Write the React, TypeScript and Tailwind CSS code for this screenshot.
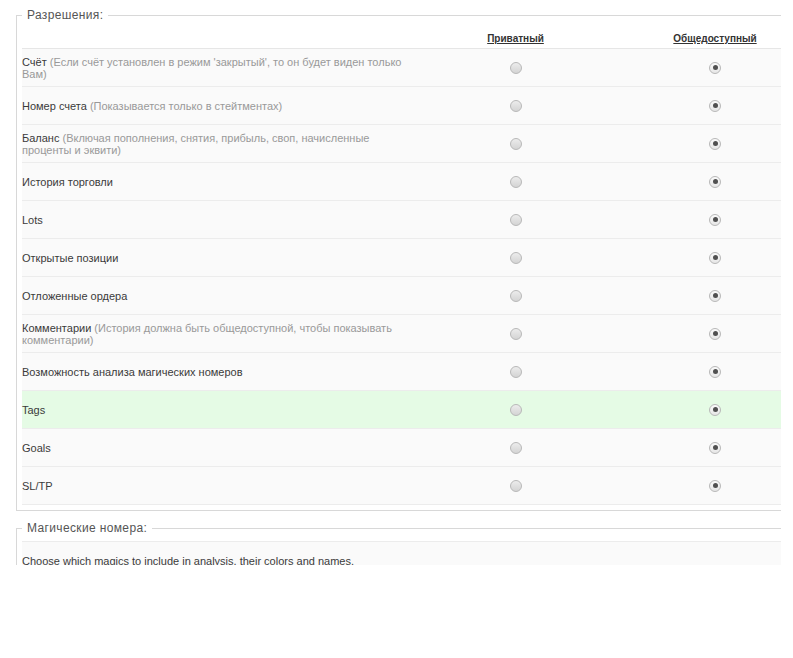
import React from 'react';

type Row = { label: string; note?: string; highlight?: boolean };

const rows: Row[] = [
  { label: 'Счёт', note: "(Если счёт установлен в режим 'закрытый', то он будет виден только Вам)" },
  { label: 'Номер счета', note: '(Показывается только в стейтментах)' },
  { label: 'Баланс', note: '(Включая пополнения, снятия, прибыль, своп, начисленные проценты и эквити)' },
  { label: 'История торговли' },
  { label: 'Lots' },
  { label: 'Открытые позиции' },
  { label: 'Отложенные ордера' },
  { label: 'Комментарии', note: '(История должна быть общедоступной, чтобы показывать комментарии)' },
  { label: 'Возможность анализа магических номеров' },
  { label: 'Tags', highlight: true },
  { label: 'Goals' },
  { label: 'SL/TP' },
];

function Radio({ checked }: { checked?: boolean }) {
  if (checked) {
    return (
      <span className="flex h-3 w-3 items-center justify-center rounded-full border border-[#b8b8b8] bg-gradient-to-b from-[#fbfbfb] to-[#e6e6e6]">
        <span className="h-[5px] w-[5px] rounded-full bg-[#505050]" />
      </span>
    );
  }
  return (
    <span className="block h-3 w-3 rounded-full border border-[#b8b8b8] bg-gradient-to-b from-[#ececec] to-[#d4d4d4]" />
  );
}

export default function App() {
  return (
    <div className="h-[565px] w-[781px] overflow-hidden bg-white font-['Liberation_Sans',Arial,sans-serif] text-[11px] text-[#3a3a3a]">
      <div className="w-[830px] pl-4 pt-[7px]">
        <fieldset className="border border-[#d8d8d8] px-[5px] pb-[5px]">
          <legend className="px-[5px] text-[12px] leading-4 tracking-[0.03em] text-[#555]">Разрешения:</legend>
          <div className="grid grid-cols-[396px_195px_204px] border-b border-[#e6e6e6] pt-[10px] pb-[3px] text-[10px] font-bold leading-3 text-[#333]">
            <span />
            <span className="text-center underline">Приватный</span>
            <span className="text-center underline">Общедоступный</span>
          </div>
          {rows.map((r) => (
            <div
              key={r.label}
              className={`grid h-[38px] grid-cols-[396px_195px_204px] items-center border-b border-[#ececec] ${r.highlight ? 'bg-[#e5fbe5]' : 'bg-[#fafafa]'}`}
            >
              <div className="pr-[8px] leading-[12px]">
                {r.label}
                {r.note && <span className="text-[#999]"> {r.note}</span>}
              </div>
              <div className="flex justify-center">
                <Radio />
              </div>
              <div className="flex justify-center">
                <Radio checked />
              </div>
            </div>
          ))}
        </fieldset>
        <fieldset className="mt-[9px] border border-[#d8d8d8] px-[5px] pb-2">
          <legend className="px-[5px] text-[12px] leading-4 tracking-[0.03em] text-[#555]">Магические номера:</legend>
          <div className="h-[6px] border-b border-[#ececec]" />
          <div className="bg-[#fafafa] pt-[13px] leading-[12px]">
            Choose which magics to include in analysis, their colors and names.
          </div>
        </fieldset>
      </div>
    </div>
  );
}
